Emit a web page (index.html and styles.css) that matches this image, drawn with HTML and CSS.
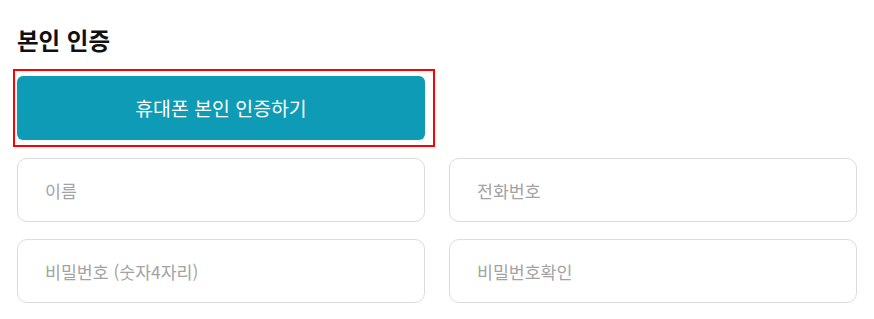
FILE: index.html
```html
<!DOCTYPE html>
<html lang="ko">
<head>
<meta charset="utf-8">
<title>본인 인증</title>
<link rel="stylesheet" href="styles.css">
</head>
<body>
<div class="page">
  <h2 class="title">본인 인증</h2>
  <div class="highlight">
    <button class="verify-btn" type="button">휴대폰 본인 인증하기</button>
  </div>
  <div class="fields">
    <input class="field" type="text" placeholder="이름">
    <input class="field" type="text" placeholder="전화번호">
    <input class="field" type="password" placeholder="비밀번호 (숫자4자리)">
    <input class="field" type="password" placeholder="비밀번호확인">
  </div>
</div>
</body>
</html>
```

FILE: styles.css
```css
html, body {
  margin: 0;
  padding: 0;
  background: #ffffff;
}

body {
  font-family: "Noto Sans CJK KR", "Noto Sans", sans-serif;
  color: #111111;
}

.page {
  padding: 25px 0 0 0;
}

.title {
  margin: 0 0 14px 17px;
  font-size: 23.5px;
  line-height: 30px;
  font-weight: 700;
  color: #111111;
}

.highlight {
  margin-left: 13px;
  width: 408px;
  padding: 5px 8px 5px 2px;
  border: 2px solid #ff0000;
}

.verify-btn {
  display: block;
  width: 408px;
  height: 64px;
  border: none;
  border-radius: 6px;
  background: #0e9bb5;
  color: #ffffff;
  font-family: "Noto Sans CJK KR", "Noto Sans", sans-serif;
  font-size: 19.4px;
  line-height: 64px;
  padding: 0;
  cursor: pointer;
}

.fields {
  margin: 11px 0 0 17px;
  display: grid;
  grid-template-columns: 408px 408px;
  column-gap: 24px;
  row-gap: 17px;
}

.field {
  box-sizing: border-box;
  width: 408px;
  height: 64px;
  border: 1px solid #dcdcdc;
  border-radius: 10px;
  padding: 0 0 0 27px;
  font-family: "Noto Sans CJK KR", "Noto Sans", sans-serif;
  font-size: 17.3px;
  color: #333333;
  background: #ffffff;
  outline: none;
}

.field::placeholder {
  color: #a3a3a3;
  opacity: 1;
}
```
